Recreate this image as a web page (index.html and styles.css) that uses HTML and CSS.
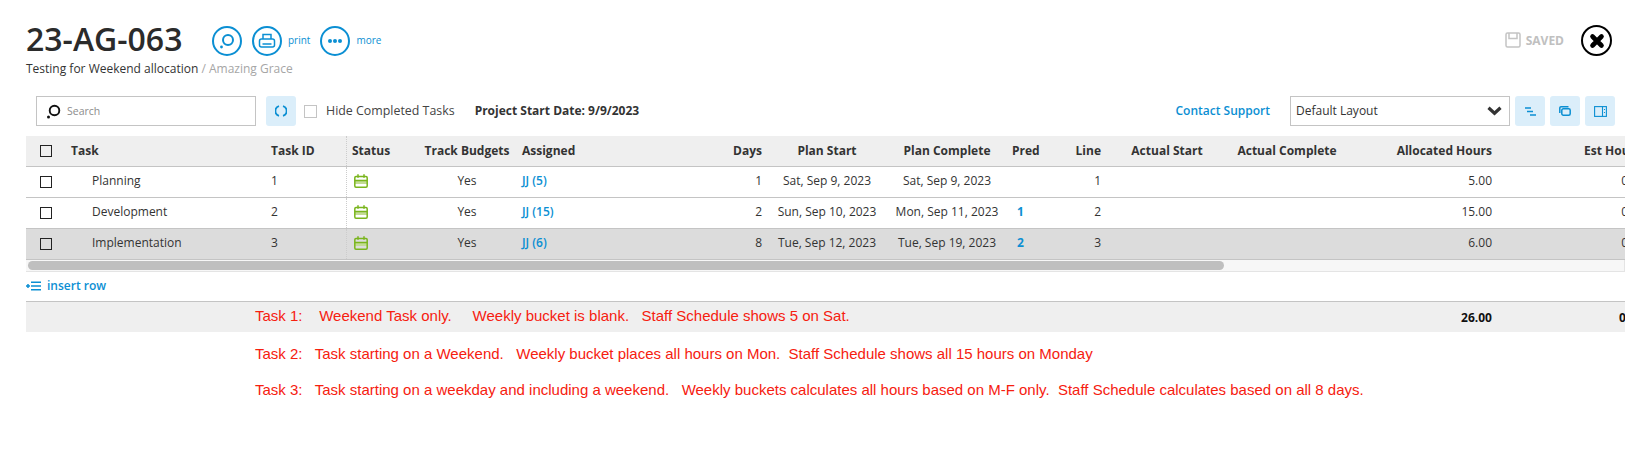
FILE: index.html
```html
<!DOCTYPE html>
<html lang="en">
<head>
    <meta charset="UTF-8">
    <title>23-AG-063</title>
    <link rel="stylesheet" href="styles.css">
</head>
<body>
    <div class="header">
        <div class="title-row">
            <h1>23-AG-063</h1>
            <a class="round-btn first">
                <svg width="16" height="16" viewBox="0 0 16 16" fill="none" stroke="#0b8fd3"><circle cx="9" cy="7" r="5" stroke-width="2"/><circle cx="2.500" cy="14" r="1.400" fill="#0b8fd3" stroke="none"/></svg>
            </a>
            <a class="round-btn">
                <svg width="18" height="16" viewBox="0 0 18 16" fill="none" stroke="#0b8fd3" stroke-width="1.500"><path d="M5 6V1.500h8V6"/><rect x="1.500" y="6" width="15" height="8" rx="2"/><path d="M4.500 11h9"/></svg>
            </a>
            <a class="action-label">print</a>
            <a class="round-btn">
                <svg width="16" height="6" viewBox="0 0 16 6" fill="#0b8fd3"><circle cx="3" cy="3" r="2"/><circle cx="8" cy="3" r="2"/><circle cx="13" cy="3" r="2"/></svg>
            </a>
            <a class="action-label">more</a>
            <div class="saved">
                <svg width="16" height="16" viewBox="0 0 16 16" fill="none" stroke="#c4c4c4" stroke-width="1.500"><path d="M2.500 1h11a1.500 1.500 0 0 1 1.500 1.500v11a1.500 1.500 0 0 1-1.500 1.500h-11A1.500 1.500 0 0 1 1 13.500v-11A1.500 1.500 0 0 1 2.500 1z"/><path d="M4 1v5.500h8V1"/></svg>
                <span>SAVED</span>
            </div>
            <a class="close-btn">
                <svg width="16" height="16" viewBox="0 0 16 16" stroke="#000" stroke-width="4.600" stroke-linecap="round"><path d="M3.500 3.500l9 9M12.500 3.500l-9 9"/></svg>
            </a>
        </div>
        <div class="subtitle">Testing for Weekend allocation <span>/ Amazing Grace</span></div>
    </div>

    <div class="toolbar">
        <div class="search">
            <svg width="15" height="15" viewBox="0 0 15 15" fill="none" stroke="#111"><circle cx="8.500" cy="6.500" r="4.800" stroke-width="1.900"/><circle cx="2.500" cy="13" r="1.500" fill="#111" stroke="none"/></svg>
            <span>Search</span>
        </div>
        <a class="tool-btn refresh">
            <svg width="12" height="14" viewBox="0 0 12 14" fill="none" stroke="#0b8fd3" stroke-width="1.800"><path d="M4 2.200A5 5 0 0 0 4 11.800M8 2.200A5 5 0 0 1 8 11.800"/></svg>
        </a>
        <span class="check light"></span>
        <span class="hide-label">Hide Completed Tasks</span>
        <strong class="start-date">Project Start Date: 9/9/2023</strong>
        <a class="contact">Contact Support</a>
        <div class="layout-select">
            <span>Default Layout</span>
            <svg width="15" height="10" viewBox="0 0 15 10" fill="none" stroke="#333" stroke-width="3.200"><path d="M1.500 1.800l6 5.500 6-5.500"/></svg>
        </div>
        <a class="tool-btn">
            <svg width="11" height="9" viewBox="0 0 11 9" stroke="#0b8fd3" stroke-width="1.400"><path d="M0 1h6M2 4.500h6M5 8h6"/></svg>
        </a>
        <a class="tool-btn">
            <svg width="12" height="10" viewBox="0 0 12 10" fill="none" stroke="#0b8fd3" stroke-width="1.500"><path d="M.8 7V2A1.200 1.200 0 0 1 2 .8h7.500"/><rect x="2.800" y="2.800" width="8.400" height="6.400" rx="1.500"/></svg>
        </a>
        <a class="tool-btn">
            <svg width="13" height="11" viewBox="0 0 13 11" fill="none" stroke="#0b8fd3" stroke-width="1.100"><rect x=".6" y=".6" width="11.800" height="9.800"/><path d="M8.500 .6v9.800"/><path d="M10.500 3v1M10.500 6v1"/></svg>
        </a>
    </div>

    <div class="grid">
        <div class="row head">
            <div class="cell cb"><span class="check"></span></div>
            <div class="cell task">Task</div>
            <div class="cell">Task ID</div>
            <div class="cell status">Status</div>
            <div class="cell center">Track Budgets</div>
            <div class="cell assigned">Assigned</div>
            <div class="cell right">Days</div>
            <div class="cell center">Plan Start</div>
            <div class="cell center">Plan Complete</div>
            <div class="cell pred-head">Pred</div>
            <div class="cell right">Line</div>
            <div class="cell center">Actual Start</div>
            <div class="cell center">Actual Complete</div>
            <div class="cell right">Allocated Hours</div>
            <div class="cell right">Est Hours</div>
        </div>

        <div class="row">
            <div class="cell cb"><span class="check"></span></div>
            <div class="cell task name">Planning</div>
            <div class="cell">1</div>
            <div class="cell status"><svg class="cal" width="14" height="14" viewBox="0 0 14 14" fill="none" stroke="#7ab51d" stroke-width="1.500"><path d="M.8 8.500h12.400" stroke="#c3dc94" stroke-width="3"/><rect x=".8" y="2.500" width="12.400" height="10.700" rx="1.200"/><path d="M.8 6.500h12.400M4 .3v3.500M10 .3v3.500"/></svg></div>
            <div class="cell center">Yes</div>
            <div class="cell assigned"><a>JJ (5)</a></div>
            <div class="cell right">1</div>
            <div class="cell center">Sat, Sep 9, 2023</div>
            <div class="cell center">Sat, Sep 9, 2023</div>
            <div class="cell pred"></div>
            <div class="cell right">1</div>
            <div class="cell"></div>
            <div class="cell"></div>
            <div class="cell right">5.00</div>
            <div class="cell right est">0.00</div>
        </div>

        <div class="row">
            <div class="cell cb"><span class="check"></span></div>
            <div class="cell task name">Development</div>
            <div class="cell">2</div>
            <div class="cell status"><svg class="cal" width="14" height="14" viewBox="0 0 14 14" fill="none" stroke="#7ab51d" stroke-width="1.500"><path d="M.8 8.500h12.400" stroke="#c3dc94" stroke-width="3"/><rect x=".8" y="2.500" width="12.400" height="10.700" rx="1.200"/><path d="M.8 6.500h12.400M4 .3v3.500M10 .3v3.500"/></svg></div>
            <div class="cell center">Yes</div>
            <div class="cell assigned"><a>JJ (15)</a></div>
            <div class="cell right">2</div>
            <div class="cell center">Sun, Sep 10, 2023</div>
            <div class="cell center">Mon, Sep 11, 2023</div>
            <div class="cell pred"><a>1</a></div>
            <div class="cell right">2</div>
            <div class="cell"></div>
            <div class="cell"></div>
            <div class="cell right">15.00</div>
            <div class="cell right est">0.00</div>
        </div>

        <div class="row selected">
            <div class="cell cb"><span class="check"></span></div>
            <div class="cell task name">Implementation</div>
            <div class="cell">3</div>
            <div class="cell status"><svg class="cal" width="14" height="14" viewBox="0 0 14 14" fill="none" stroke="#7ab51d" stroke-width="1.500"><path d="M.8 8.500h12.400" stroke="#c3dc94" stroke-width="3"/><rect x=".8" y="2.500" width="12.400" height="10.700" rx="1.200"/><path d="M.8 6.500h12.400M4 .3v3.500M10 .3v3.500"/></svg></div>
            <div class="cell center">Yes</div>
            <div class="cell assigned"><a>JJ (6)</a></div>
            <div class="cell right">8</div>
            <div class="cell center">Tue, Sep 12, 2023</div>
            <div class="cell center">Tue, Sep 19, 2023</div>
            <div class="cell pred"><a>2</a></div>
            <div class="cell right">3</div>
            <div class="cell"></div>
            <div class="cell"></div>
            <div class="cell right">6.00</div>
            <div class="cell right est">0.00</div>
        </div>

        <div class="scrollbar"><div class="thumb"></div></div>

        <a class="insert-row">
            <svg width="16" height="10" viewBox="0 0 16 10" stroke="#0b8fd3"><path d="M5 1.200h10M5 5h10M5 8.800h10" stroke-width="1.500"/><path d="M0 5h4M2 3v4" stroke-width="1.500"/></svg>
            insert row
        </a>

        <div class="totals">
            <div class="note">Task 1: &nbsp; &nbsp;Weekend Task only. &nbsp; &nbsp; Weekly bucket is blank. &nbsp; Staff Schedule shows 5 on Sat.</div>
            <div class="total alloc">26.00</div>
            <div class="total est">0.00</div>
        </div>
    </div>

    <div class="notes">
        <div class="note">Task 2: &nbsp; Task starting on a Weekend. &nbsp; Weekly bucket places all hours on Mon. &nbsp;Staff Schedule shows all 15 hours on Monday</div>
        <div class="note">Task 3: &nbsp; Task starting on a weekday and including a weekend. &nbsp; Weekly buckets calculates all hours based on M-F only. &nbsp;Staff Schedule calculates based on all 8 days.</div>
    </div>
</body>
</html>
```

FILE: styles.css
```css
html, body { margin: 0; background: #fff; }
body { font-family: "Open Sans", sans-serif; font-size: 12px; color: #333; height: 471px; overflow: hidden; }
a { color: #0b8fd3; }

.header { padding: 23px 0 0 26px; }
.title-row { display: flex; align-items: center; height: 32px; }
h1 { margin: 0; font-size: 32px; font-weight: 600; line-height: 32px; color: #2b2b2b; width: 186px; }
.round-btn { width: 26px; height: 26px; border: 2px solid #0b8fd3; border-radius: 50%; display: flex; align-items: center; justify-content: center; margin-top: 3px; flex: none; }
.round-btn.first { margin-right: 10px; }
.action-label { font-size: 10px; margin: 2px 10px 0 6px; }
.saved { margin-left: auto; display: flex; align-items: center; gap: 5px; color: #c0c0c0; font-weight: 700; font-size: 12px; margin-top: 2px; }
.close-btn { width: 27px; height: 27px; border: 2px solid #000; border-radius: 50%; display: flex; align-items: center; justify-content: center; margin: 3px 28px 0 17px; }
.subtitle { margin-top: 5px; line-height: 17px; color: #333; }
.subtitle span { color: #a6a6a6; }

.toolbar { display: flex; align-items: center; height: 30px; margin-top: 19px; padding-left: 36px; line-height: 28px; }
.search { box-sizing: border-box; width: 220px; height: 30px; border: 1px solid #c4c4c4; display: flex; align-items: center; gap: 6px; padding-left: 9px; font-size: 10.500px; color: #8c8c8c; }
.tool-btn { width: 30px; height: 30px; background: #dbeefa; border-radius: 3px; display: flex; align-items: center; justify-content: center; margin-left: 5px; flex: none; }
.tool-btn.refresh { margin-left: 10px; }
.check { display: block; box-sizing: border-box; width: 12px; height: 12px; border: 1.500px solid #222; }
.check.light { width: 13px; height: 13px; border: 1px solid #c4c4c4; margin-left: 8px; }
.hide-label { margin-left: 9px; color: #444; font-size: 12.400px; }
.start-date { margin-left: 20px; font-weight: 700; }
.contact { margin-left: auto; font-weight: 600; }
.layout-select { box-sizing: border-box; width: 220px; height: 30px; border: 1px solid #c4c4c4; margin-left: 20px; padding: 0 7px 0 5px; display: flex; align-items: center; justify-content: space-between; }
.toolbar .tool-btn:last-child { margin-right: 25px; }

.grid { margin: 10px 15px 0 26px; overflow: hidden; }
.row { display: grid; grid-template-columns: 36px 200px 84px 70px 102px 182px 68px 118px 122px 52px 47px 120px 120px 151px 149px; width: 1621px; height: 31px; align-items: stretch; border-bottom: 1px solid #c4c4c4; box-sizing: border-box; }
.row.head { background: #efefef; font-weight: 700; }
.row.selected { background: #dcdcdc; }
.cell { display: flex; align-items: center; padding: 0 6px 3px 9px; white-space: nowrap; min-width: 0; }
.row.head .cell { padding-bottom: 2px; }
.cell.cb { padding: 0 0 1px 14px; }
.row.head .cell.cb { padding: 0 0 0 14px; }
.cell.name { padding-left: 30px; }
.cell.status { padding-left: 5px; border-left: 1px dotted #ccc; }
.row .cell.assigned { padding-left: 4px; }
.row .cell.center { justify-content: center; padding-left: 0; padding-right: 0; }
.cell.right { justify-content: flex-end; }
.cell.est { padding-right: 2px; }
.row .cell.pred-head { padding-left: 4px; }
.cell.pred { font-weight: 700; }
.assigned a { font-weight: 600; }
.cal { margin-left: 2px; }

.scrollbar { box-sizing: border-box; height: 12px; background: #f7f7f7; border-bottom: 1px solid #e4e4e4; border-right: 1px solid #e4e4e4; padding: 1px 0 0 2px; }
.thumb { width: 1196px; height: 9px; background: #bfbfbf; border-radius: 5px; }

.insert-row { display: flex; align-items: center; gap: 5px; height: 29px; font-size: 12px; font-weight: 600; padding-bottom: 2px; box-sizing: border-box; }

.totals { display: flex; align-items: center; height: 31px; background: #efefef; border-top: 1px solid #c4c4c4; box-sizing: border-box; padding-left: 229px; font-weight: 700; color: #111; overflow: hidden; }
.totals .note { padding-bottom: 3px; }
.note { font-family: "Liberation Sans", sans-serif; font-size: 15px; font-weight: 400; color: #f6200f; white-space: nowrap; }
.total { flex: none; text-align: right; }
.total.alloc { margin-left: auto; width: 60px; margin-right: 127px; }
.total.est { margin-right: -18px; }
.notes { padding: 4px 0 0 255px; }
.notes .note { line-height: 36px; }
```
